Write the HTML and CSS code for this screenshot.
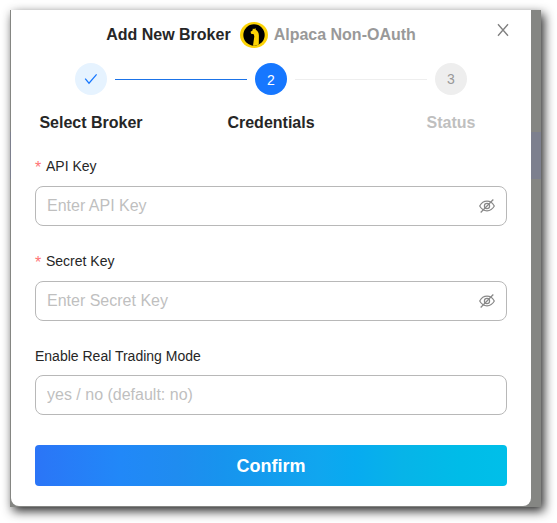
FILE: index.html
```html
<!DOCTYPE html>
<html lang="en">
<head>
<meta charset="utf-8">
<title>Add New Broker</title>
<link rel="stylesheet" href="styles.css">
</head>
<body>
<div class="backdrop">
  <main class="modal">
    <button class="close" aria-label="Close">
      <svg viewBox="0 0 12 14" width="12" height="14"><path d="M1 1.2 11 12.8M11 1.2 1 12.8"/></svg>
    </button>
    <header class="title">
      <span class="title-main">Add New Broker</span>
      <svg class="logo" viewBox="0 0 28 26" width="28" height="26">
        <ellipse cx="14" cy="13" rx="14" ry="13" fill="#fcd305"/>
        <ellipse cx="14" cy="13" rx="10.7" ry="10.7" fill="#000"/>
        <path d="M10.6 9.7 12.5 8.5 12.9 6.4 14.1 7.2 15.3 6.1 15.8 7.7Q18.7 9.3 18.9 13.5L18.8 22.6Q15.3 24.2 13 23.4L14.3 14.5 13.8 12.2 11.1 11.8Z" fill="#fcd305"/>
      </svg>
      <span class="title-sub">Alpaca Non-OAuth</span>
    </header>
    <ol class="steps">
      <li class="step done">
        <span class="dot"><svg viewBox="0 0 14 12" width="14" height="12"><path d="M1.2 5.7 5 10.2 12.6 1.4"/></svg></span>
        <span class="step-name">Select Broker</span>
      </li>
      <li class="rail rail-done"></li>
      <li class="step active"><span class="dot">2</span><span class="step-name">Credentials</span></li>
      <li class="rail"></li>
      <li class="step waiting"><span class="dot">3</span><span class="step-name">Status</span></li>
    </ol>
    <form class="form">
      <div class="field">
        <label for="api"><span class="required">*</span>API Key</label>
        <div class="box">
          <input id="api" placeholder="Enter API Key">
          <svg class="eye" viewBox="0 0 16 16" width="16" height="16"><path d="M.7 8Q3.3 3.2 8 3.2T15.3 8Q12.7 12.8 8 12.8T.7 8Z"/><circle cx="8" cy="8" r="2.6"/><path d="M14.3 1.5 1.7 14.5"/></svg>
        </div>
      </div>
      <div class="field">
        <label for="secret"><span class="required">*</span>Secret Key</label>
        <div class="box">
          <input id="secret" placeholder="Enter Secret Key">
          <svg class="eye" viewBox="0 0 16 16" width="16" height="16"><path d="M.7 8Q3.3 3.2 8 3.2T15.3 8Q12.7 12.8 8 12.8T.7 8Z"/><circle cx="8" cy="8" r="2.6"/><path d="M14.3 1.5 1.7 14.5"/></svg>
        </div>
      </div>
      <div class="field field-mode">
        <label for="mode">Enable Real Trading Mode</label>
        <div class="box"><input id="mode" placeholder="yes / no (default: no)"></div>
      </div>
      <button class="confirm" type="button">Confirm</button>
    </form>
  </main>
</div>
</body>
</html>
```
FILE: styles.css
```css
* { box-sizing: border-box; }

body {
  margin: 0;
  padding: 10px;
  height: 523px;
  overflow: hidden;
  background: #fff;
  color: #262626;
  font-family: "Liberation Sans", Arial, sans-serif;
}

.backdrop {
  width: 531px;
  height: 497px;
  padding-left: 1px;
  background: linear-gradient(#858683 122px, #7d808e 122px, #7d808e 169px, #858683 169px);
  box-shadow: 3px 4px 10px rgba(0, 0, 0, .85);
}

.modal {
  position: relative;
  width: 520px;
  height: 496px;
  padding: 11px 24px 0;
  border-radius: 0 0 8px 8px;
  background: #fff;
}

.close {
  position: absolute;
  top: 13px;
  right: 22px;
  width: 12px;
  height: 14px;
  padding: 0;
  border: 0;
  background: none;
}

svg { display: block; fill: none; }

.close path { stroke: #808080; stroke-width: 1.35; }

.title {
  display: flex;
  align-items: center;
  justify-content: center;
  height: 28px;
  padding-right: 20px;
  font-size: 16px;
  font-weight: 700;
}

.logo { margin: 0 6px 0 9px; }
.title-sub { color: #999; }

.steps {
  display: flex;
  justify-content: center;
  gap: 8px;
  margin: 14px 0 0;
  padding: 0;
  list-style: none;
}

.step {
  display: flex;
  flex: 0 0 32px;
  flex-direction: column;
  align-items: center;
  min-width: 0;
  width: 32px;
}

.dot {
  display: flex;
  align-items: center;
  justify-content: center;
  width: 32px;
  height: 32px;
  border-radius: 50%;
  font-size: 14px;
}

.step-name {
  margin-top: 16px;
  font-size: 16px;
  font-weight: 700;
  line-height: 24px;
  white-space: nowrap;
}

.done .dot { background: #e6f3ff; }
.done path { stroke: #1677ff; stroke-width: 1.25; }
.active .dot { background: #1677ff; color: #fff; padding-top: 1px; }
.waiting .dot { background: #eee; color: #999; }
.waiting .step-name { color: #bfbfbf; }

.rail {
  flex: 0 0 132px;
  height: 1px;
  margin-top: 16px;
  background: #eee;
}

.rail-done { background: #1b73e8; }

.form { margin-top: 19px; }
.field { height: 95px; }
.field-mode { height: 94px; }

.field label {
  display: flex;
  align-items: center;
  height: 24px;
  margin-bottom: 8px;
  font-size: 14px;
}

.field-mode label { margin-bottom: 7px; }
.required { width: 11px; color: #ff7375; font-size: 16px; line-height: 14px; padding-top: 3px; }

.box {
  display: flex;
  align-items: center;
  height: 40px;
  padding: 0 11px;
  border: 1px solid #b8b8b8;
  border-radius: 8px;
}

.box input {
  flex: 1;
  min-width: 0;
  padding: 0;
  border: 0;
  outline: 0;
  background: none;
  font: 16px/24px "Liberation Sans", Arial, sans-serif;
}

.box input::placeholder { color: #bfbfbf; opacity: 1; }
.eye { stroke: #888; stroke-width: 1.2; }

.confirm {
  display: block;
  width: 100%;
  height: 41px;
  margin-top: 7px;
  padding: 2px 0 0;
  border: 0;
  border-radius: 4px;
  background: linear-gradient(90deg, #2b75f7, #2188f8 18%, #1f8cf0 30%, #1794ee 40%, #10a6ef 60%, #07abf0 68%, #07b4e8 78%, #00bce8 90%, #00bfe9);
  color: #fff;
  font: 700 18px/39px "Liberation Sans", Arial, sans-serif;
}
```
